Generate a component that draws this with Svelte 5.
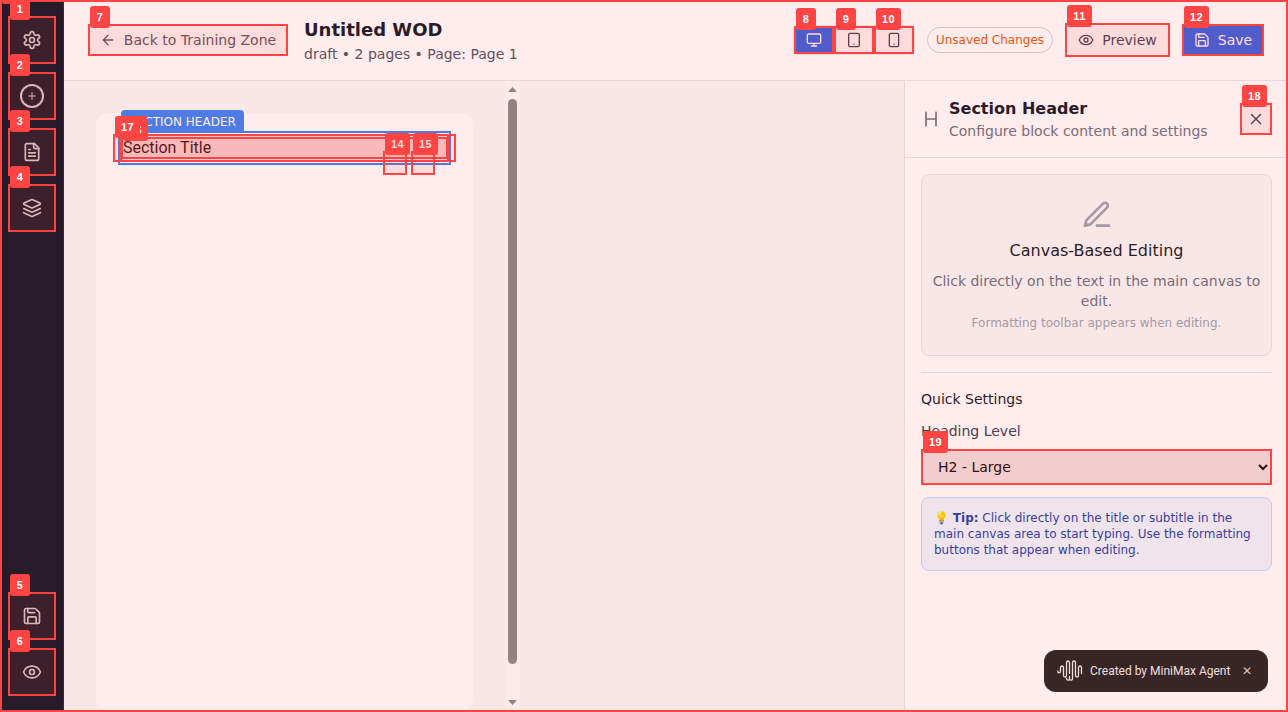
<script>
  const paths = {
    settings: '<path d="M12.22 2h-.44a2 2 0 0 0-2 2v.18a2 2 0 0 1-1 1.73l-.43.25a2 2 0 0 1-2 0l-.15-.08a2 2 0 0 0-2.73.73l-.22.38a2 2 0 0 0 .73 2.73l.15.1a2 2 0 0 1 1 1.72v.51a2 2 0 0 1-1 1.74l-.15.09a2 2 0 0 0-.73 2.73l.22.38a2 2 0 0 0 2.73.73l.15-.08a2 2 0 0 1 2 0l.43.25a2 2 0 0 1 1 1.73V20a2 2 0 0 0 2 2h.44a2 2 0 0 0 2-2v-.18a2 2 0 0 1 1-1.73l.43-.25a2 2 0 0 1 2 0l.15.08a2 2 0 0 0 2.73-.73l.22-.39a2 2 0 0 0-.73-2.73l-.15-.08a2 2 0 0 1-1-1.74v-.5a2 2 0 0 1 1-1.74l.15-.09a2 2 0 0 0 .73-2.73l-.22-.38a2 2 0 0 0-2.73-.73l-.15.08a2 2 0 0 1-2 0l-.43-.25a2 2 0 0 1-1-1.73V4a2 2 0 0 0-2-2z"/><circle cx="12" cy="12" r="3"/>',
    plus: '<path d="M5 12h14M12 5v14"/>',
    file: '<path d="M15 2H6a2 2 0 0 0-2 2v16a2 2 0 0 0 2 2h12a2 2 0 0 0 2-2V7Z"/><path d="M14 2v4a2 2 0 0 0 2 2h4M10 9H8M16 13H8M16 17H8"/>',
    layers: '<path d="m12.83 2.18a2 2 0 0 0-1.66 0L2.6 6.08a1 1 0 0 0 0 1.83l8.58 3.91a2 2 0 0 0 1.66 0l8.58-3.9a1 1 0 0 0 0-1.83Z"/><path d="m22 17.65-9.17 4.16a2 2 0 0 1-1.66 0L2 17.65"/><path d="m22 12.65-9.17 4.16a2 2 0 0 1-1.66 0L2 12.65"/>',
    save: '<path d="M15.2 3a2 2 0 0 1 1.4.6l3.8 3.8a2 2 0 0 1 .6 1.4V19a2 2 0 0 1-2 2H5a2 2 0 0 1-2-2V5a2 2 0 0 1 2-2z"/><path d="M17 21v-7a1 1 0 0 0-1-1H8a1 1 0 0 0-1 1v7M7 3v4a1 1 0 0 0 1 1h7"/>',
    eye: '<path d="M2.062 12.348a1 1 0 0 1 0-.696 10.75 10.75 0 0 1 19.876 0 1 1 0 0 1 0 .696 10.75 10.75 0 0 1-19.876 0"/><circle cx="12" cy="12" r="3"/>',
    arrow: '<path d="m12 19-7-7 7-7M19 12H5"/>',
    monitor: '<rect width="20" height="14" x="2" y="3" rx="2"/><path d="M8 21h8M12 17v4"/>',
    tablet: '<rect width="16" height="20" x="4" y="2" rx="2"/><path d="M12 18h.01"/>',
    phone: '<rect width="14" height="20" x="5" y="2" rx="2"/><path d="M12 18h.01"/>',
    heading: '<path d="M6 12h12M6 20V4M18 20V4"/>',
    pen: '<path d="M12 20h9"/><path d="M16.5 3.5a2.12 2.12 0 0 1 3 3L7 19l-4 1 1-4Z"/>',
    close: '<path d="M18 6 6 18M6 6l12 12"/>'
  };

  const marks = [
    [0, 0, 0, 1288, 712],
    [1, 8, 16, 48, 48],
    [2, 8, 72, 48, 48],
    [3, 8, 128, 48, 48],
    [4, 8, 184, 48, 48],
    [5, 8, 592, 48, 48],
    [6, 8, 648, 48, 48],
    [7, 88, 24, 200, 32],
    [8, 794, 26, 40, 28],
    [9, 834, 26, 40, 28],
    [10, 874, 26, 40, 28],
    [11, 1065, 23, 105, 34],
    [12, 1182, 24, 82, 32],
    [13, 120, 134, 329, 28],
    [14, 383, 151, 24, 24],
    [15, 411, 151, 24, 24],
    [16, 121, 137, 327, 22],
    [17, 113, 134, 343, 28],
    [18, 1240, 103, 32, 32],
    [19, 921, 449, 351, 36]
  ];
</script>

{#snippet icon(name, size)}
  <svg width={size} height={size} viewBox="0 0 24 24" fill="none" stroke="currentColor" stroke-width="2" stroke-linecap="round" stroke-linejoin="round">{@html paths[name]}</svg>
{/snippet}

<div class="app">
  <nav class="rail">
    <button>{@render icon('settings', 20)}</button>
    <button><span class="ring">{@render icon('plus', 12)}</span></button>
    <button>{@render icon('file', 20)}</button>
    <button>{@render icon('layers', 20)}</button>
    <span class="spacer"></span>
    <button>{@render icon('save', 20)}</button>
    <button>{@render icon('eye', 20)}</button>
  </nav>

  <div class="body">
    <header>
      <button class="btn back">{@render icon('arrow', 16)}Back to Training Zone</button>
      <div class="heading">
        <h1>Untitled WOD</h1>
        <p>draft • 2 pages • Page: Page 1</p>
      </div>
      <span class="spacer"></span>
      <div class="devices">
        <button class="active">{@render icon('monitor', 16)}</button>
        <button>{@render icon('tablet', 16)}</button>
        <button>{@render icon('phone', 16)}</button>
      </div>
      <span class="status">Unsaved Changes</span>
      <button class="btn preview">{@render icon('eye', 16)}Preview</button>
      <button class="btn primary">{@render icon('save', 16)}Save</button>
    </header>

    <div class="work">
      <main>
        <div class="scroll">
          <div class="page">
            <div class="block">
              <span class="tag">SECTION HEADER</span>
              <div class="title">Section Title</div>
            </div>
          </div>
        </div>
        <div class="bar">
          <svg width="9" height="5"><path d="M0 5 4.5 0 9 5Z" fill="#898888" /></svg>
          <div class="thumb"></div>
          <svg width="9" height="5"><path d="M0 0 4.5 5 9 0Z" fill="#898888" /></svg>
        </div>
      </main>

      <aside>
        <div class="panel-head">
          <span class="h">{@render icon('heading', 20)}</span>
          <div>
            <h2>Section Header</h2>
            <p>Configure block content and settings</p>
          </div>
          <span class="spacer"></span>
          <button>{@render icon('close', 18)}</button>
        </div>
        <div class="panel">
          <div class="card">
            {@render icon('pen', 32)}
            <h3>Canvas-Based Editing</h3>
            <p>Click directly on the text in the main canvas to edit.</p>
            <small>Formatting toolbar appears when editing.</small>
          </div>
          <div class="quick">
            <h4>Quick Settings</h4>
            <label for="level">Heading Level</label>
            <select id="level"><option>H2 - Large</option></select>
            <div class="tip">💡 <b>Tip:</b> Click directly on the title or subtitle in the main canvas area to start typing. Use the formatting buttons that appear when editing.</div>
          </div>
        </div>
      </aside>
    </div>
  </div>

  <div class="credit">
    <svg width="26" height="22" viewBox="0 0 26 22" fill="none" stroke="currentColor" stroke-width="1.3" stroke-linecap="round">
      <path d="M.8 11v.6a1.35 1.35 0 0 0 2.7 0V7.5a1.5 1.5 0 0 1 3 0v8a1.5 1.5 0 0 0 3 0v-13a1.5 1.5 0 0 1 3 0v11M9.5 18.2v.5a1.5 1.5 0 0 0 3 0v-2.2M12.5 18.7a1.5 1.5 0 0 0 3 0V2.5a1.5 1.5 0 0 1 3 0v13a1.5 1.5 0 0 0 3 0v-8a1.5 1.5 0 0 1 3 0v6" />
    </svg>
    <span>Created by MiniMax Agent</span>
    <i>✕</i>
  </div>

  {#each marks as [n, x, y, w, h]}
    <div class="mark" style="left:{x}px;top:{y}px;width:{w}px;height:{h}px"></div>
    <div class="num" class:wide={n > 9} style="left:{x + 2}px;top:{y - 18}px">{n}</div>
  {/each}
</div>

<style>
  :global(body) { overflow: hidden; }
  .app {
    position: relative;
    display: flex;
    width: 1288px;
    height: 712px;
    overflow: hidden;
    background: #fff;
    color: #111827;
    font: 14px/20px "DejaVu Sans", sans-serif;
  }
  .app *, .app { box-sizing: border-box; }
  h1, h2, h3, h4, p { margin: 0; }
  button { border: 0; padding: 0; background: none; color: inherit; font: inherit; display: flex; align-items: center; justify-content: center; }
  svg { display: block; flex: none; }
  .spacer { flex: 1; }

  .rail { width: 64px; background: #111827; border-right: 1px solid #1f2937; padding: 16px 8px; display: flex; flex-direction: column; gap: 8px; color: #d1d5db; }
  .rail button { width: 48px; height: 48px; flex: none; }
  .ring { width: 24px; height: 24px; border: 2px solid; border-radius: 50%; display: flex; align-items: center; justify-content: center; }

  .body { flex: 1; display: flex; flex-direction: column; min-width: 0; }
  header { height: 81px; border-bottom: 1px solid #e5e7eb; padding: 0 24px; display: flex; align-items: center; gap: 12px; }
  .btn { height: 32px; padding: 0 12px; gap: 8px; border-radius: 6px; white-space: nowrap; }
  .back { width: 200px; color: #4b5563; }
  .heading { margin-left: 4px; white-space: nowrap; }
  h1 { font-size: 18px; line-height: 28px; }
  .heading p { color: #4b5563; }
  .devices { display: flex; border: 1px solid #e5e7eb; border-radius: 6px; overflow: hidden; color: #374151; }
  .devices button { width: 40px; height: 28px; }
  .devices .active { background: #2563eb; color: #fff; }
  .status { width: 126px; height: 26px; border: 1px solid #d1d5db; border-radius: 13px; color: #ea580c; font-size: 12px; line-height: 24px; text-align: center; white-space: nowrap; }
  .preview { width: 105px; height: 34px; border: 1px solid #d1d5db; color: #374151; }
  .primary { width: 82px; background: #2563eb; color: #fff; }

  .work { flex: 1; display: flex; min-height: 0; }
  main { width: 840px; display: flex; background: #f9fafa; }
  .scroll { width: 441px; padding: 32px 32px 2px; }
  .page { height: 597px; border-radius: 12px; background: #fff; padding: 18px 22px; }
  .block { position: relative; height: 34px; border: 2px solid #3b82f6; padding: 4px 3px; }
  .title { height: 22px; background: #f9fafb; color: #000; font: 16px/22px Roboto, sans-serif; }
  .tag { position: absolute; left: 1px; top: -23px; width: 123px; height: 23px; border-radius: 4px; background: #3b82f6; color: #fff; font-size: 12px; line-height: 24px; text-align: center; white-space: nowrap; }
  .bar { width: 15px; background: #fcfcfc; display: flex; flex-direction: column; align-items: center; padding: 6px 0; }
  .thumb { width: 9px; height: 565px; margin: 7px 0 36px; border-radius: 5px; background: #898888; }

  aside { width: 384px; border-left: 1px solid #e5e7eb; }
  .panel-head { height: 77px; border-bottom: 1px solid #e5e7eb; padding: 0 16px; display: flex; align-items: center; gap: 8px; color: #6b7280; white-space: nowrap; }
  .panel-head h2 { font-size: 16px; line-height: 24px; color: #111827; }
  .panel-head button { width: 32px; height: 32px; color: #374151; }
  .panel { padding: 16px; display: flex; flex-direction: column; gap: 16px; }
  .card { height: 182px; border: 1px solid #e5e7eb; border-radius: 8px; background: #f9fafa; padding: 24px 0; display: flex; flex-direction: column; align-items: center; text-align: center; color: #9ca3af; }
  .card h3 { margin: 8px 0; font-size: 16px; line-height: 24px; font-weight: 400; color: #111827; }
  .card p { color: #6b7280; }
  .card small { margin-top: 4px; font-size: 12px; line-height: 16px; }
  .quick { border-top: 1px solid #e5e7eb; padding-top: 16px; display: flex; flex-direction: column; }
  h4 { font-size: 14px; font-weight: 400; margin-bottom: 12px; }
  label { color: #374151; margin-bottom: 8px; }
  select { height: 36px; border: 1px solid #d1d5db; border-radius: 6px; background: #efefef; color: #000; font: inherit; padding: 0 0 0 12px; }
  .tip { margin-top: 12px; border: 1px solid #bfdbfe; border-radius: 8px; background: #eff6ff; color: #1e40af; padding: 12px; font-size: 12px; line-height: 16px; }

  .credit { position: absolute; left: 1044px; top: 650px; width: 224px; height: 42px; border-radius: 12px; background: #222; color: #efefef; display: flex; align-items: center; padding-left: 13px; font: 12px/18px Roboto, sans-serif; white-space: nowrap; }
  .credit span { width: 141px; margin-left: 7px; }
  .credit i { margin-left: 11px; font: 12px/18px "DejaVu Sans", sans-serif; color: #cfcfcf; }

  .mark { position: absolute; border: 2px solid #f44; background: rgba(255, 68, 68, 0.1); }
  .num { position: absolute; width: 20px; height: 22px; border-radius: 3px; background: #f44; color: #fff; font: bold 11px/22px "Liberation Sans", sans-serif; letter-spacing: 0.4px; text-align: center; }
  .wide { width: 25px; }
</style>
